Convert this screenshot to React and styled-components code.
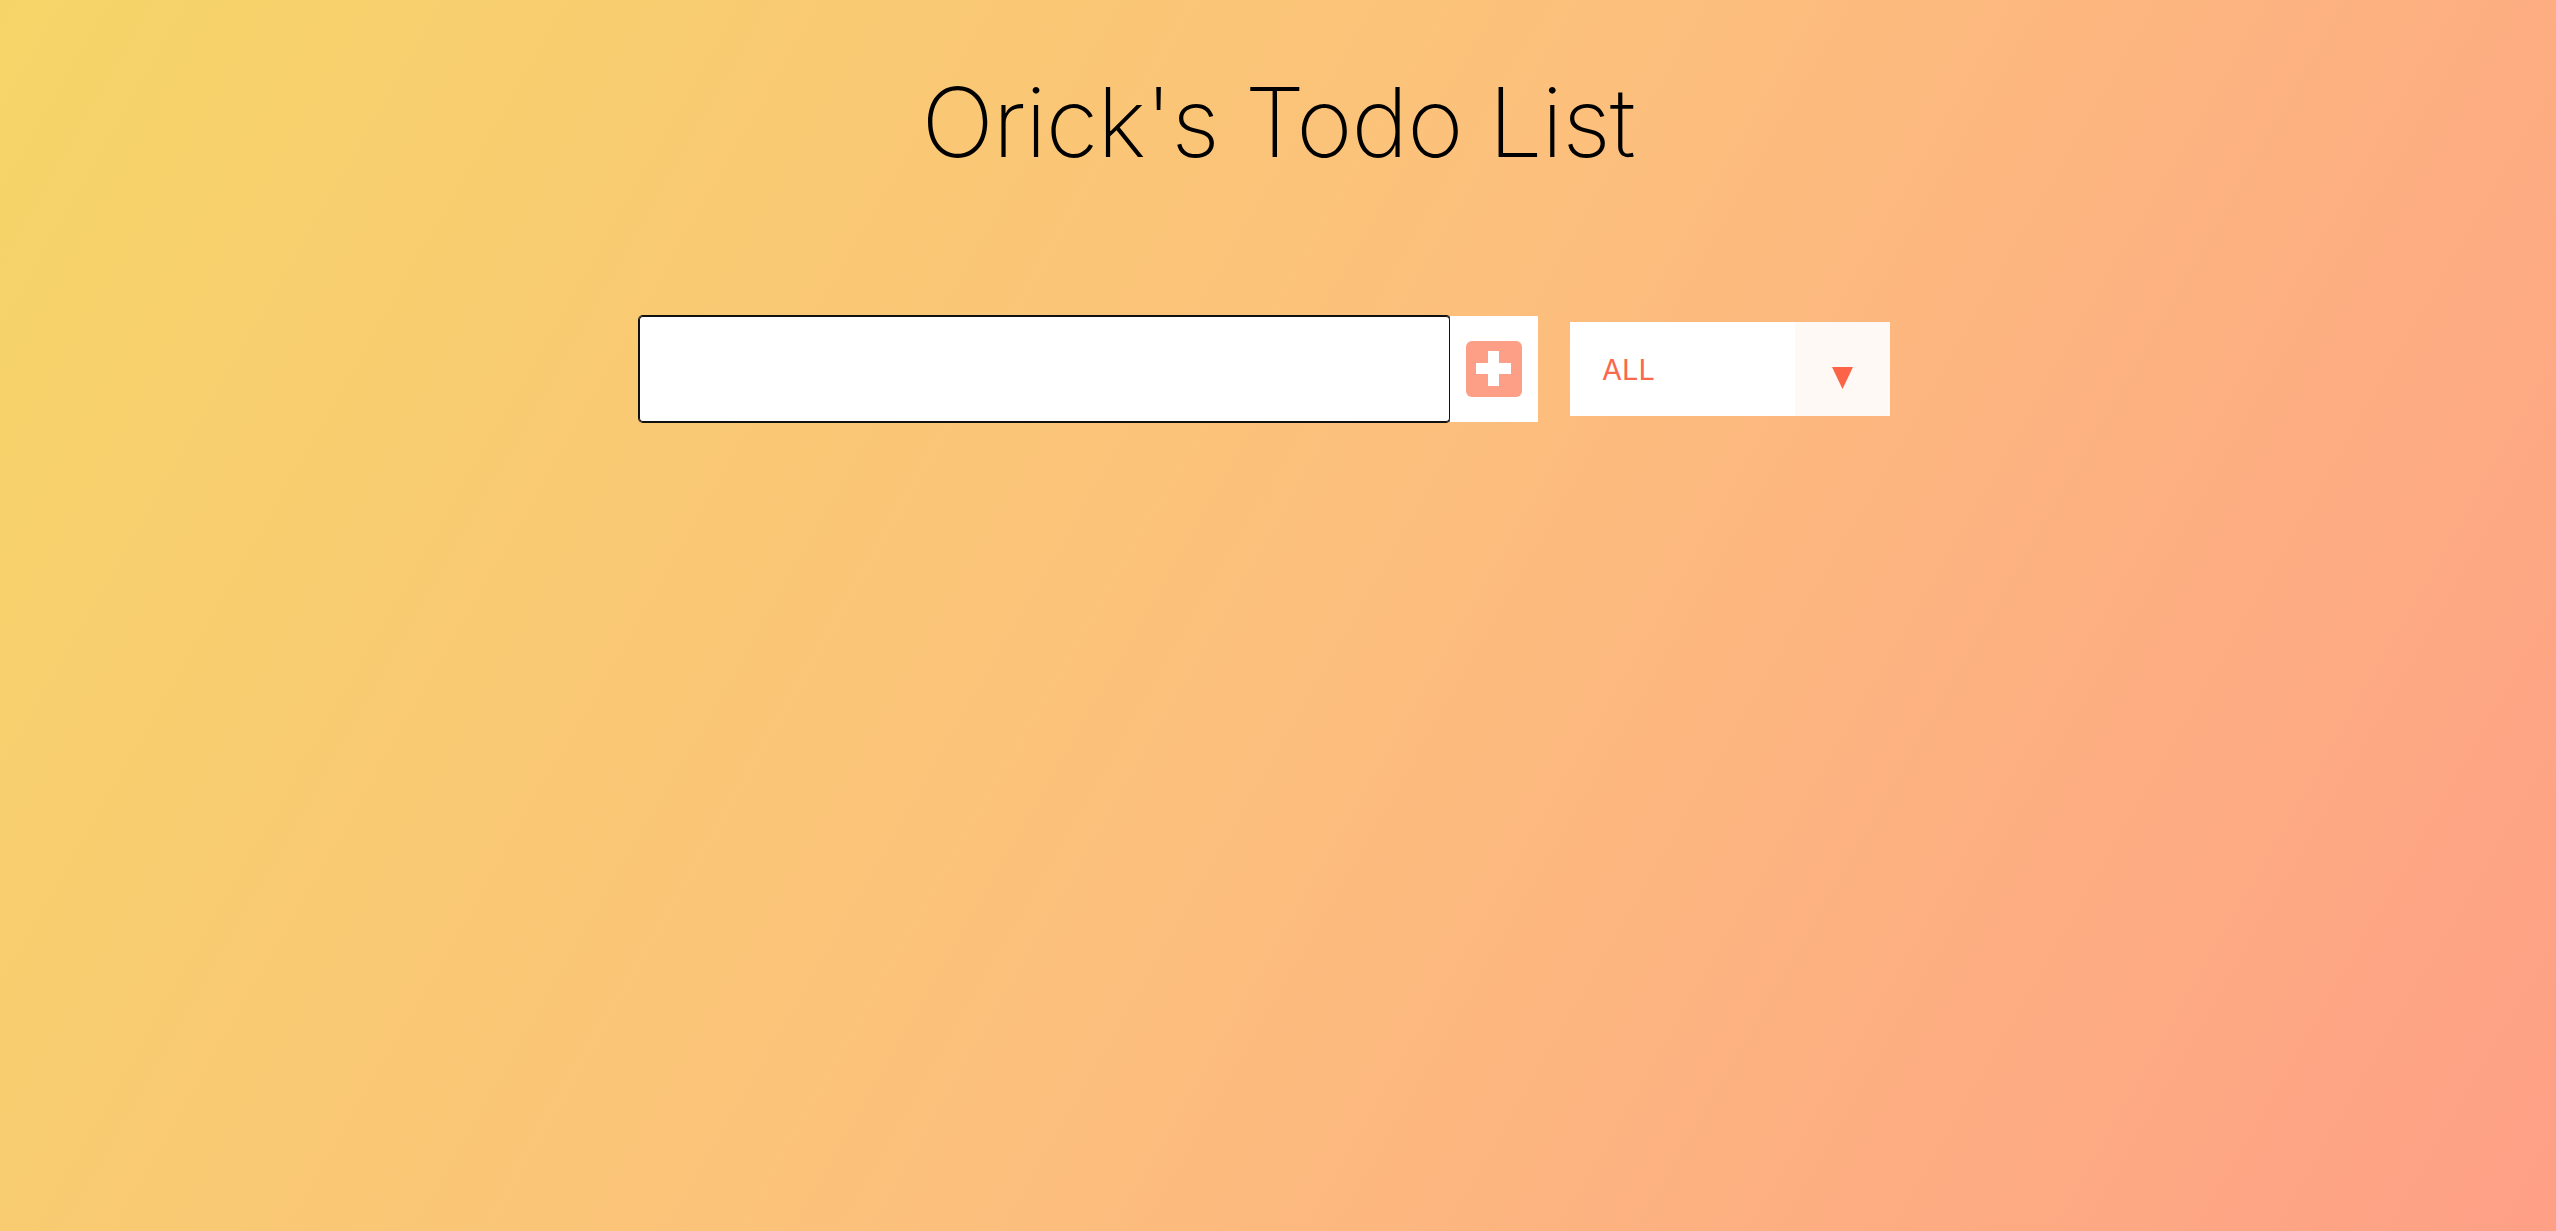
import React from 'react';
import styled, { createGlobalStyle } from 'styled-components';

const GlobalStyle = createGlobalStyle`
  * {
    margin: 0;
    padding: 0;
    box-sizing: border-box;
  }
  body {
    min-height: 100vh;
    background-image: linear-gradient(120deg, #f6d568, #fcc07c 50%, #fe9f86);
    font-family: Inter, "Open Sans", sans-serif;
    color: black;
  }
`;

const Header = styled.header`
  display: flex;
  justify-content: center;
  padding-top: 50px;
`;

const Title = styled.h1`
  font-size: 96px;
  line-height: 144px;
  font-weight: 200;
  letter-spacing: -1px;
`;

const Form = styled.form`
  display: flex;
  justify-content: center;
  align-items: center;
  margin-top: 122px;
  padding-left: 5px;
`;

const TodoInput = styled.input`
  width: 811px;
  height: 106px;
  padding: 16px;
  font-size: 64px;
  font-family: Inter, sans-serif;
  border: none;
  background: white;
  border-radius: 4px;
  box-shadow: 0 0 0 1px #111, inset 0 0 0 1px #111;
  outline: none;
  caret-color: black;
`;

const AddButton = styled.button`
  width: 88px;
  height: 106px;
  border: none;
  background: white;
  display: flex;
  align-items: center;
  justify-content: center;
  cursor: pointer;
`;

const SelectBox = styled.div`
  display: flex;
  width: 320px;
  height: 94px;
  margin-left: 32px;
  margin-right: 32px;
  background: white;
  overflow: hidden;
`;

const FilterSelect = styled.select`
  flex: 1;
  min-width: 0;
  appearance: none;
  border: none;
  outline: none;
  background: white;
  color: #f9694b;
  font-family: Inter, sans-serif;
  font-size: 29px;
  padding: 0 32px;
  cursor: pointer;
`;

const ArrowPanel = styled.div`
  flex-shrink: 0;
  width: 95px;
  display: flex;
  justify-content: center;
  align-items: flex-start;
  padding-top: 45px;
  background: #fff9f6;
  pointer-events: none;
`;

function PlusSquare() {
  return (
    <svg width="56" height="56" viewBox="0 0 56 56">
      <rect x="0" y="0" width="56" height="56" rx="6" fill="#fd9e86" />
      <rect x="10" y="22" width="35" height="11" fill="white" />
      <rect x="22" y="10" width="11" height="35" fill="white" />
    </svg>
  );
}

function Triangle() {
  return (
    <svg width="21" height="22" viewBox="0 0 21 22">
      <polygon points="0,0 21,0 10.5,22" fill="#fb6447" />
    </svg>
  );
}

export default function App() {
  return (
    <>
      <GlobalStyle />
      <Header>
        <Title>Orick's Todo List</Title>
      </Header>
      <Form onSubmit={(e) => e.preventDefault()}>
        <TodoInput type="text" autoFocus />
        <AddButton type="submit">
          <PlusSquare />
        </AddButton>
        <SelectBox>
          <FilterSelect name="todos" defaultValue="all">
            <option value="all">ALL</option>
            <option value="completed">Completed</option>
            <option value="uncompleted">Uncompleted</option>
          </FilterSelect>
          <ArrowPanel>
            <Triangle />
          </ArrowPanel>
        </SelectBox>
      </Form>
    </>
  );
}
